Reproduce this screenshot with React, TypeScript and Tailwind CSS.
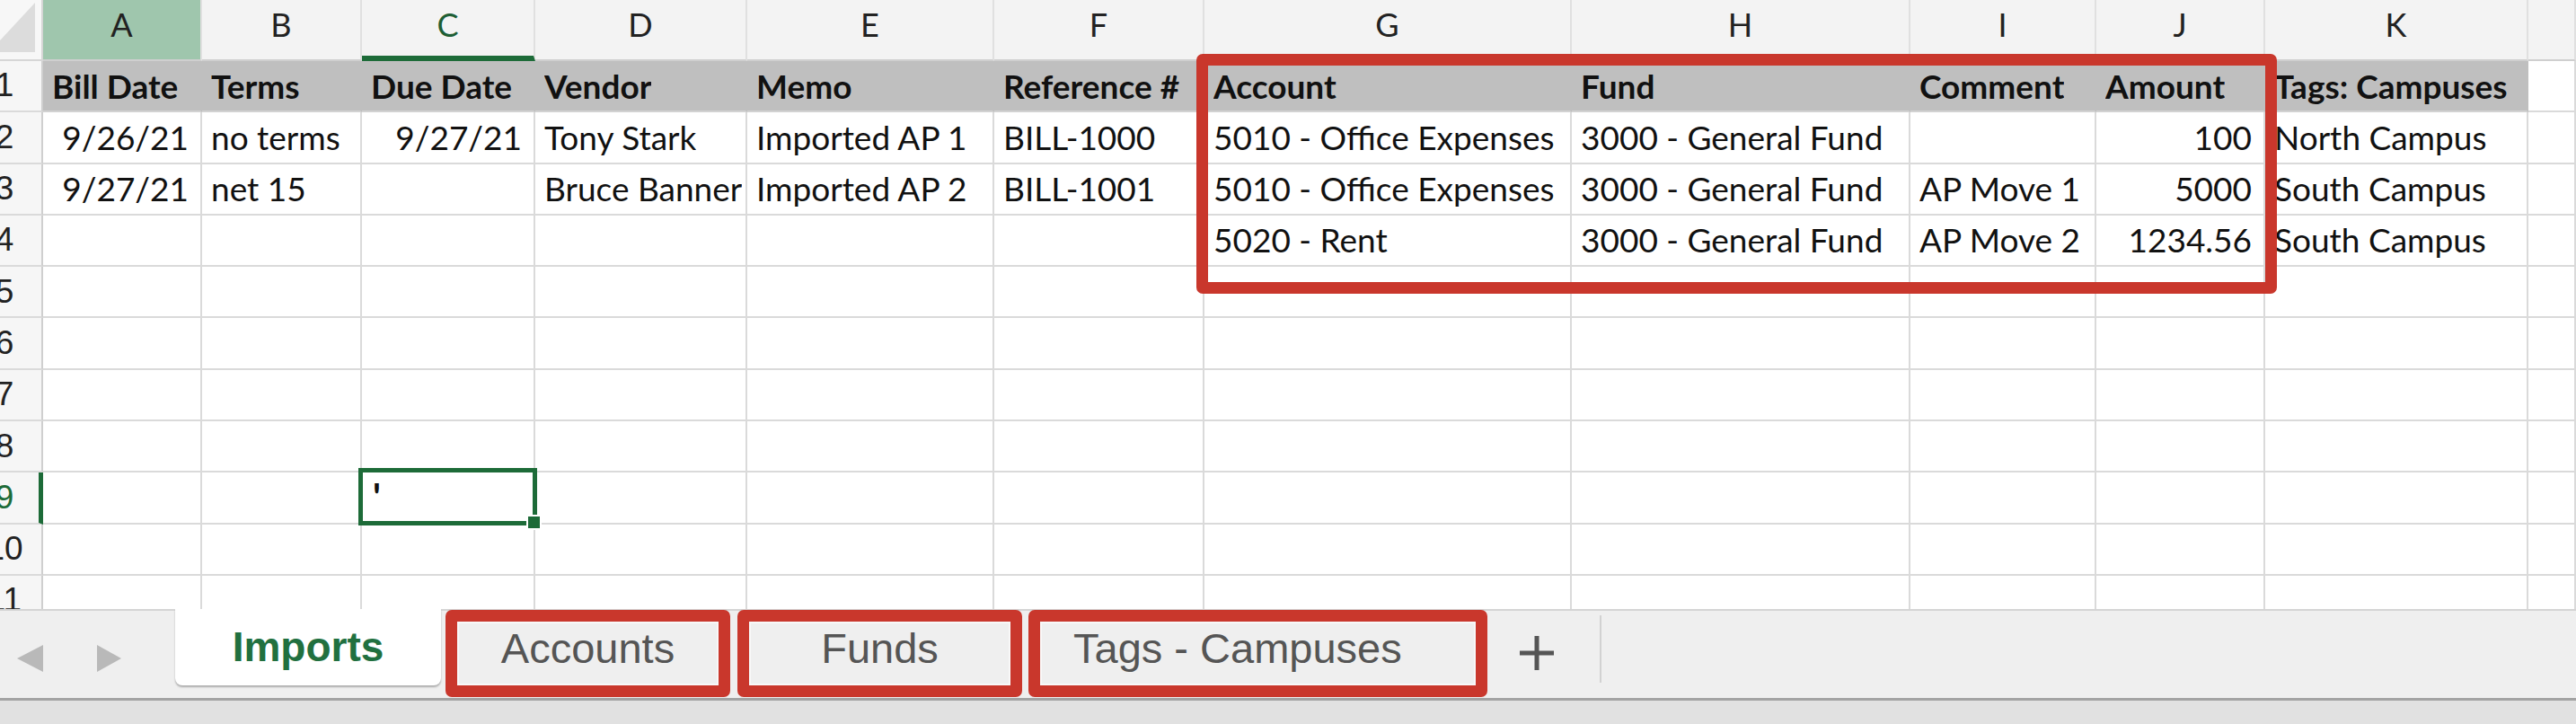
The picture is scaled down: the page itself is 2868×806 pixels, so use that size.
import React from 'react';

type Col = { key: string; w: string };

// column widths measured off the sheet, borders included
const columns: Col[] = [
  { key: 'A', w: 'w-[177px]' },
  { key: 'B', w: 'w-[178px]' },
  { key: 'C', w: 'w-[193px]' },
  { key: 'D', w: 'w-[236px]' },
  { key: 'E', w: 'w-[275px]' },
  { key: 'F', w: 'w-[234px]' },
  { key: 'G', w: 'w-[409px]' },
  { key: 'H', w: 'w-[377px]' },
  { key: 'I', w: 'w-[207px]' },
  { key: 'J', w: 'w-[188px]' },
  { key: 'K', w: 'w-[293px]' },
  { key: 'L', w: 'flex-1' },
];

const rows: string[][] = [
  ['Bill Date', 'Terms', 'Due Date', 'Vendor', 'Memo', 'Reference #', 'Account', 'Fund', 'Comment', 'Amount', 'Tags: Campuses'],
  ['9/26/21', 'no terms', '9/27/21', 'Tony Stark', 'Imported AP 1', 'BILL-1000', '5010 - Office Expenses', '3000 - General Fund', '', '100', 'North Campus'],
  ['9/27/21', 'net 15', '', 'Bruce Banner', 'Imported AP 2', 'BILL-1001', '5010 - Office Expenses', '3000 - General Fund', 'AP Move 1', '5000', 'South Campus'],
  ['', '', '', '', '', '', '5020 - Rent', '3000 - General Fund', 'AP Move 2', '1234.56', 'South Campus'],
  [], [], [], [], [], [], [],
];

const isNumber = (v: string) => /^[\d/.]+$/.test(v);

function ColumnHeader() {
  return (
    <div className="flex h-[68px] font-[Lato,sans-serif] text-[36px] text-[#222]">
      <div className="w-[48px] shrink-0 overflow-hidden bg-[#f7f7f7] border-r-2 border-b-2 border-[#d6d6d6]">
        <svg width="48" height="66" viewBox="0 0 48 66">
          <polygon points="-12,58 39,3 39,58" fill="#dcdcdc" />
        </svg>
      </div>
      {columns.map((c) => {
        const isA = c.key === 'A';
        const isC = c.key === 'C';
        return (
          <div
            key={c.key}
            className={`${c.w} shrink-0 flex items-center justify-center border-r-2 border-[#e0e0e0] ${
              isA ? 'bg-[#9fc6ad]' : 'bg-[#f3f3f3]'
            } ${isC ? 'border-b-[6px] border-b-[#1d6b38] text-[#1d5e34] pb-[8px]' : 'border-b-2 border-b-[#cfcfcf] pb-[12px]'}`}
          >
            {c.key === 'L' ? '' : c.key}
          </div>
        );
      })}
    </div>
  );
}

function RowHead({ n }: { n: number }) {
  const active = n === 9;
  return (
    <div
      className={`w-[48px] shrink-0 overflow-hidden flex items-center bg-[#f6f6f6] border-b-2 border-b-[#dadada] ${
        active ? 'border-r-[5px] border-r-[#1d6b38] text-[#1d6b38]' : 'border-r-2 border-r-[#cfcfcf] text-[#222]'
      }`}
    >
      <div className="w-[90px] -ml-[40px] shrink-0 text-center font-['Liberation_Sans',Arial,sans-serif] text-[37px] leading-[1.2]">
        {n}
      </div>
    </div>
  );
}

function Selection() {
  return (
    <div className="absolute -left-[4px] -top-[5px] -right-[4px] -bottom-[3px] border-[5px] border-[#1d6b38] z-10">
      <div className="absolute -right-[10px] -bottom-[10px] w-[17px] h-[17px] bg-[#1d6b38] border-2 border-white" />
    </div>
  );
}

function Row({ n, cells }: { n: number; cells: string[] }) {
  const header = n === 1;
  return (
    <div className="flex h-[57.3px] font-[Lato,sans-serif] text-[37px] text-[#111]">
      <RowHead n={n} />
      {columns.map((c, i) => {
        const v = cells[i] ?? '';
        const num = isNumber(v);
        const gray = header && c.key !== 'L';
        const selected = n === 9 && c.key === 'C';
        return (
          <div
            key={c.key}
            className={`${c.w} shrink-0 flex items-center border-b-2 border-r-2 ${
              num ? 'justify-end pr-[13px] pl-[8px]' : 'justify-start pl-[10px] pr-[2px]'
            } ${gray ? 'bg-[#bfbfbf] border-r-[#bfbfbf] border-b-[#d2d2d2] font-bold' : 'bg-white border-[#dadada]'} ${
              selected ? 'relative' : ''
            }`}
          >
            <span className="block min-w-0 overflow-hidden whitespace-nowrap leading-[1.25]">{v}</span>
            {selected && (
              <>
                <span className="absolute left-[12px] top-[2px] text-[42px] font-bold leading-[1.2]">'</span>
                <Selection />
              </>
            )}
          </div>
        );
      })}
    </div>
  );
}

function SheetTab({ label, className }: { label: string; className: string }) {
  return (
    <div
      className={`${className} shrink-0 h-[97px] -mt-[1px] border-[13px] border-[#c9372c] rounded-[7px] bg-[#efefef] text-[47px] text-[#555]`}
    >
      <div className="w-full h-full flex items-center border-2 border-[#f8f8f8] pb-[10px] leading-[1.15]">
        {label}
      </div>
    </div>
  );
}

function TabBar() {
  return (
    <div className="h-[99px] bg-[#efefef] border-t-2 border-[#d4d4d4] flex items-start font-['Liberation_Sans',Arial,sans-serif]">
      <div className="w-[195px] shrink-0 h-full flex items-center pl-[19px] pt-[8px] gap-[60px]">
        <svg width="29" height="30" viewBox="0 0 29 30">
          <polygon points="29,0 29,30 0,15" fill="#b9b9b9" />
        </svg>
        <svg width="27" height="30" viewBox="0 0 27 30">
          <polygon points="0,0 0,30 27,15" fill="#b9b9b9" />
        </svg>
      </div>
      <div className="w-[296px] h-[85px] -mt-[2px] shrink-0 bg-white rounded-b-[8px] shadow-[0_2px_2px_rgba(0,0,0,0.28)] flex items-center justify-center text-[46px] font-bold text-[#21703f] leading-[1.15]">
        Imports
      </div>
      <SheetTab label="Accounts" className="ml-[5px] w-[317px] [&>div]:justify-center" />
      <SheetTab label="Funds" className="ml-[8px] w-[317px] [&>div]:justify-center" />
      <SheetTab label="Tags - Campuses" className="ml-[7px] w-[511px] [&>div]:justify-start [&>div]:pl-[35px]" />
      <div className="ml-[36px] h-full flex items-center pb-[4px]">
        <svg width="38" height="38" viewBox="0 0 38 38">
          <rect x="16.5" y="0" width="5" height="38" fill="#555" />
          <rect x="0" y="16.5" width="38" height="5" fill="#555" />
        </svg>
      </div>
      <div className="ml-[51px] mt-[5px] w-[2px] h-[75px] bg-[#d2d2d2]" />
    </div>
  );
}

export default function App() {
  return (
    <div className="w-[2868px] h-[806px] overflow-hidden bg-white flex flex-col">
      <div className="relative h-[678px] shrink-0 overflow-hidden">
        <ColumnHeader />
        {rows.map((cells, i) => (
          <Row key={i} n={i + 1} cells={cells} />
        ))}
        {/* red annotation round the account / fund / comment / amount block */}
        <div className="absolute left-[1332px] top-[60px] w-[1203px] h-[267px] border-[13px] border-[#c9372c] rounded-[7px] z-20 pointer-events-none" />
      </div>
      <TabBar />
      <div className="h-[3px] bg-[#a3a3a3]" />
      <div className="flex-1 bg-[#e1e1e1]" />
    </div>
  );
}
